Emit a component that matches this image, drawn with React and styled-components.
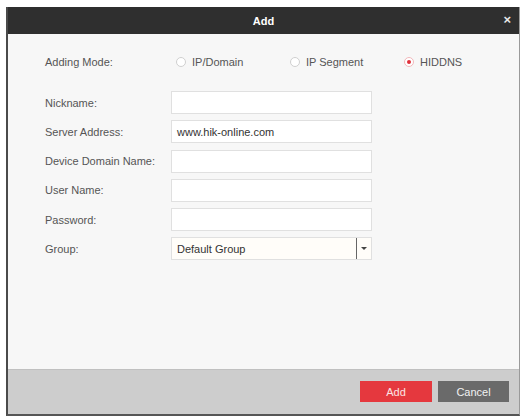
import React from "react";
import styled, { createGlobalStyle } from "styled-components";

const Global = createGlobalStyle`
  html, body { margin: 0; padding: 0; background: #fff; }
  body { font-family: "Liberation Sans", Arial, sans-serif; }
  * { box-sizing: border-box; }
`;

const Page = styled.div`
  width: 529px;
  height: 417px;
  padding: 7px 9px 1px 6px;
  background: #fff;
`;

const Dialog = styled.div`
  height: 100%;
  display: flex;
  flex-direction: column;
  border: 1px solid #9a9a9a;
  border-left: 2px solid #4a4a4a;
  border-bottom: 2px solid #555;
  border-top: none;
  background: #f7f7f7;
`;

const Header = styled.div`
  height: 27px;
  flex: none;
  background: #2f2f2f;
  display: flex;
  align-items: center;
  justify-content: center;
  position: relative;
  color: #fff;
  font-size: 11px;
  font-weight: bold;
`;

const Close = styled.span`
  position: absolute;
  right: 8px;
  top: 6px;
  font-size: 13px;
  font-weight: bold;
  color: #e8e8e8;
  line-height: 14px;
`;

const Body = styled.div`
  flex: 1;
  padding: 18px 0 0 37px;
  display: flex;
  flex-direction: column;
`;

const ModeRow = styled.div`
  display: flex;
  align-items: center;
  height: 20px;
  margin-bottom: 19px;
`;

const Label = styled.div`
  width: 126px;
  flex: none;
  font-size: 11px;
  color: #555;
`;

const Options = styled.div`
  display: flex;
  margin-left: 5px;
`;

const Option = styled.label`
  width: 114px;
  display: flex;
  align-items: center;
  gap: 6px;
  font-size: 11px;
  color: #555;
`;

const Radio = styled.span`
  width: 10px;
  height: 10px;
  border-radius: 50%;
  border: 1px solid ${(p) => (p.$on ? "#f2b7bb" : "#d0d0d0")};
  background: #fff;
  display: flex;
  align-items: center;
  justify-content: center;
  &::after {
    content: "";
    width: 4px;
    height: 4px;
    border-radius: 50%;
    background: ${(p) => (p.$on ? "#e0303a" : "transparent")};
  }
`;

const Form = styled.div`
  display: grid;
  grid-template-columns: 126px 201px;
  grid-auto-rows: 23px;
  row-gap: 6.3px;
  align-items: center;
`;

const Field = styled.div`
  height: 23px;
  border: 1px solid #e0e0e0;
  background: ${(p) => (p.$cream ? "#fffdf9" : "#fff")};
  display: flex;
  align-items: center;
  padding-left: 5px;
  font-size: 11px;
  color: #333;
`;

const Value = styled.span`
  flex: 1;
`;

const Arrow = styled.span`
  width: 15px;
  height: 100%;
  border-left: 1px solid #666;
  display: flex;
  align-items: center;
  justify-content: center;
  &::after {
    content: "";
    border-left: 3px solid transparent;
    border-right: 3px solid transparent;
    border-top: 3px solid #444;
  }
`;

const Footer = styled.div`
  height: 45px;
  flex: none;
  background: #cdcdcd;
  border-top: 1px solid #c0c0c0;
  display: flex;
  justify-content: flex-end;
  align-items: flex-start;
  padding: 11px 10px 0 0;
  gap: 6px;
`;

const Button = styled.div`
  width: ${(p) => p.$w}px;
  height: 21px;
  background: ${(p) => p.$bg};
  color: ${(p) => p.$fg};
  font-size: 11px;
  display: flex;
  align-items: center;
  justify-content: center;
`;

const fields = [
  ["Nickname:", ""],
  ["Server Address:", "www.hik-online.com"],
  ["Device Domain Name:", ""],
  ["User Name:", ""],
  ["Password:", ""],
];

export default function App() {
  return (
    <Page>
      <Global />
      <Dialog>
        <Header>
          Add
          <Close>×</Close>
        </Header>
        <Body>
          <ModeRow>
            <Label>Adding Mode:</Label>
            <Options>
              <Option><Radio />IP/Domain</Option>
              <Option><Radio />IP Segment</Option>
              <Option><Radio $on />HIDDNS</Option>
            </Options>
          </ModeRow>
          <Form>
            {fields.map(([l, v]) => (
              <React.Fragment key={l}>
                <Label>{l}</Label>
                <Field>{v}</Field>
              </React.Fragment>
            ))}
            <Label>Group:</Label>
            <Field $cream>
              <Value>Default Group</Value>
              <Arrow />
            </Field>
          </Form>
        </Body>
        <Footer>
          <Button $w={72} $bg="#e5383e" $fg="#fbe3e4">Add</Button>
          <Button $w={71} $bg="#6a6a6a" $fg="#f2f2f2">Cancel</Button>
        </Footer>
      </Dialog>
    </Page>
  );
}
